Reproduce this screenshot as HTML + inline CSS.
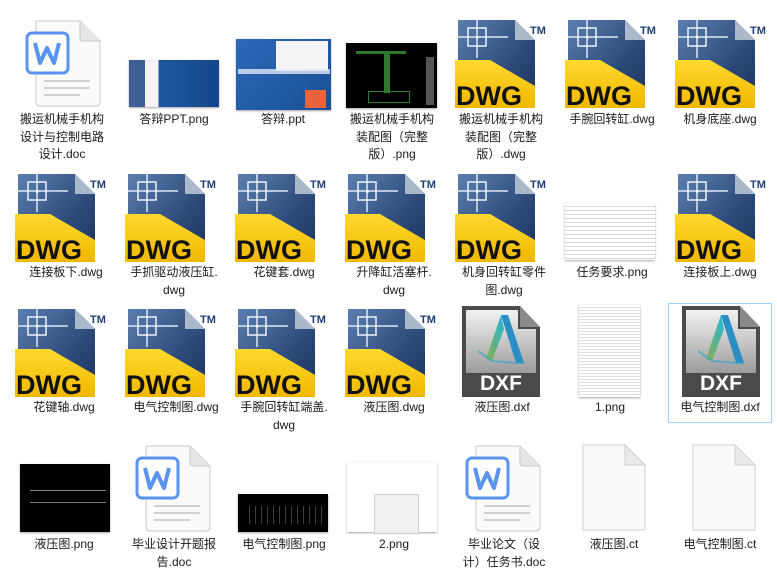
<!DOCTYPE html>
<html><head><meta charset="utf-8">
<style>
body{margin:0;width:777px;height:580px;background:#fff;position:relative;overflow:hidden;font-family:"Liberation Sans","Noto Sans CJK SC",sans-serif;}
.l{position:absolute;width:104px;text-align:center;font-size:12px;line-height:17.5px;color:#1a1a1a;white-space:nowrap;}
svg.ic{position:absolute;left:0;top:0;}
.t{position:absolute;box-shadow:0 1px 2px rgba(0,0,0,.35);}
.sel{position:absolute;left:668px;top:303px;width:102px;height:118px;border:1px solid #99d1ff;}
</style></head><body>
<div class="sel"></div>
<svg class="ic" width="777" height="580">
<defs>
<linearGradient id="bl" x1="0" y1="0" x2="1" y2="1"><stop offset="0" stop-color="#5b7fb0"/><stop offset="0.6" stop-color="#2d4a7a"/><stop offset="1" stop-color="#1c335e"/></linearGradient>
<linearGradient id="yl" x1="0" y1="0" x2="0" y2="1"><stop offset="0" stop-color="#ffd92e"/><stop offset="1" stop-color="#f0b800"/></linearGradient>
<linearGradient id="gy" x1="0" y1="0" x2="0" y2="1"><stop offset="0" stop-color="#f2f2f2"/><stop offset="1" stop-color="#9c9c9c"/></linearGradient>
<linearGradient id="ag" x1="0" y1="1" x2="1" y2="0"><stop offset="0" stop-color="#8bb04a"/><stop offset="1" stop-color="#22b6d8"/></linearGradient>
<symbol id="dwg" viewBox="0 0 104 100">
<path d="M10 6H67L87 26V92H10Z" fill="url(#bl)"/>
<path d="M67 6V26H87Z" fill="#aab8cc"/>
<path d="M10 23H60M29 6V44" stroke="#dfe8f3" stroke-width="1.5" fill="none"/>
<rect x="20" y="14" width="18" height="18" fill="none" stroke="#eef3f9" stroke-width="1.5"/>
<rect x="28" y="22" width="2.5" height="2.5" fill="#fff"/>
<path d="M7 46H42L87 72V94H7Z" fill="url(#yl)"/>
<text x="8" y="91" font-family="Liberation Sans" font-weight="bold" font-size="27" fill="#111">DWG</text>
<text x="82" y="20" font-family="Liberation Sans" font-weight="bold" font-size="11" fill="#1f3f73">TM</text>
</symbol>
<symbol id="dxf" viewBox="0 0 104 100">
<path d="M14 3H72L92 24V94H14Z" fill="#4a4a4a"/>
<path d="M18 7H70V26H88V70H18Z" fill="url(#gy)"/>
<path d="M72 3V24H92Z" fill="#8a8a8a"/>
<path d="M53 12L38 56L44 58L56 26Z" fill="url(#ag)"/>
<path d="M53 12H60L76 60H68Z" fill="#2a8fc4"/>
<path d="M30 48L44 58L68 60L76 60" fill="none" stroke="#2aa8c8" stroke-width="2" opacity=".6"/>
<text x="53" y="87" text-anchor="middle" font-family="Liberation Sans" font-weight="bold" font-size="21" fill="#fff">DXF</text>
</symbol>
<symbol id="doc" viewBox="0 0 104 100">
<path d="M28 7H72L92 27V88Q92 92 88 92H32Q28 92 28 88Z" fill="#fafafa" stroke="#c8c8c8"/>
<path d="M72 7V24Q72 27 75 27H92" fill="#e6e6e6" stroke="#c8c8c8"/>
<rect x="19" y="19" width="41" height="40" rx="5" fill="#fff" stroke="#5b93f0" stroke-width="3"/>
<path d="M27 29L32 49L39 34L46 49L51 29" fill="none" stroke="#5b93f0" stroke-width="4" stroke-linejoin="round"/>
<path d="M36 67H82M36 74H82M36 81H72" stroke="#cfcfcf" stroke-width="2"/>
</symbol>
<symbol id="blank" viewBox="0 0 104 100">
<path d="M25 6H67L87 26V91H25Z" fill="#fafafa" stroke="#d0d0d0"/>
<path d="M67 6V26H87Z" fill="#e9e9e9" stroke="#d0d0d0"/>
</symbol>
</defs>
<use href="#doc" x="8" y="14" width="104" height="100"/>
<use href="#dwg" x="448" y="14" width="104" height="100"/>
<use href="#dwg" x="558" y="14" width="104" height="100"/>
<use href="#dwg" x="668" y="14" width="104" height="100"/>
<use href="#dwg" x="8" y="168" width="104" height="100"/>
<use href="#dwg" x="118" y="168" width="104" height="100"/>
<use href="#dwg" x="228" y="168" width="104" height="100"/>
<use href="#dwg" x="338" y="168" width="104" height="100"/>
<use href="#dwg" x="448" y="168" width="104" height="100"/>
<use href="#dwg" x="668" y="168" width="104" height="100"/>
<use href="#dwg" x="8" y="303" width="104" height="100"/>
<use href="#dwg" x="118" y="303" width="104" height="100"/>
<use href="#dwg" x="228" y="303" width="104" height="100"/>
<use href="#dwg" x="338" y="303" width="104" height="100"/>
<use href="#dxf" x="448" y="303" width="104" height="100"/>
<use href="#dxf" x="668" y="303" width="104" height="100"/>
<use href="#doc" x="118" y="439" width="104" height="100"/>
<use href="#doc" x="448" y="439" width="104" height="100"/>
<use href="#blank" x="558" y="439" width="104" height="100"/>
<use href="#blank" x="668" y="439" width="104" height="100"/>
</svg>

<div class="t" style="left:129px;top:60px;width:90px;height:47px;background:linear-gradient(90deg,#3d5f97 0 18%,#f3f3f3 18% 33%,#1e58a0 33%,#14478a 100%);"></div>
<div class="t" style="left:236px;top:39px;width:95px;height:71px;background:linear-gradient(135deg,#2a69b8,#1a4f96);">
 <div style="position:absolute;left:40px;top:2px;width:52px;height:30px;background:#f4f4f4"></div>
 <div style="position:absolute;left:2px;top:30px;width:92px;height:5px;background:#dde8f5;opacity:.8"></div>
 <div style="position:absolute;left:69px;top:51px;width:21px;height:18px;background:#e8643a"></div>
</div>
<div class="t" style="left:346px;top:43px;width:91px;height:65px;background:#000;">
 <div style="position:absolute;left:38px;top:8px;width:6px;height:42px;background:#2f7a2f"></div>
 <div style="position:absolute;left:10px;top:8px;width:50px;height:3px;background:#2f7a2f"></div>
 <div style="position:absolute;left:80px;top:14px;width:8px;height:48px;background:#555"></div>
 <div style="position:absolute;left:22px;top:48px;width:40px;height:10px;border:1px solid #2f7a2f"></div>
</div>
<div class="t" style="left:565px;top:203px;width:90px;height:57px;background:repeating-linear-gradient(#fff 0 3px,#d8d8d8 3px 4px);"></div>
<div class="t" style="left:579px;top:305px;width:61px;height:92px;background:repeating-linear-gradient(#fff 0 2px,#e0e0e0 2px 3px);"></div>
<div class="t" style="left:20px;top:464px;width:90px;height:68px;background:#000;">
 <div style="position:absolute;left:10px;top:26px;width:76px;height:1px;background:#888"></div>
 <div style="position:absolute;left:10px;top:38px;width:76px;height:1px;background:#777"></div>
</div>
<div class="t" style="left:238px;top:494px;width:90px;height:38px;background:#000;">
 <div style="position:absolute;left:6px;top:12px;width:80px;height:18px;background:repeating-linear-gradient(90deg,#000 0 5px,#666 5px 6px);opacity:.6"></div>
</div>
<div class="t" style="left:347px;top:462px;width:90px;height:70px;background:#fff;">
 <div style="position:absolute;left:27px;top:32px;width:43px;height:38px;background:#f0f0f0;border:1px solid #ccc"></div>
</div>

<div class="l" style="left:10px;top:111px">搬运机械手机构<br>设计与控制电路<br>设计.doc</div>
<div class="l" style="left:122px;top:111px">答辩PPT.png</div>
<div class="l" style="left:231px;top:111px">答辩.ppt</div>
<div class="l" style="left:340px;top:111px">搬运机械手机构<br>装配图（完整<br>版）.png</div>
<div class="l" style="left:449px;top:111px">搬运机械手机构<br>装配图（完整<br>版）.dwg</div>
<div class="l" style="left:560px;top:111px">手腕回转缸.dwg</div>
<div class="l" style="left:668px;top:111px">机身底座.dwg</div>
<div class="l" style="left:14px;top:264px">连接板下.dwg</div>
<div class="l" style="left:122px;top:264px">手抓驱动液压缸.<br>dwg</div>
<div class="l" style="left:232px;top:264px">花键套.dwg</div>
<div class="l" style="left:342px;top:264px">升降缸活塞杆.<br>dwg</div>
<div class="l" style="left:452px;top:264px">机身回转缸零件<br>图.dwg</div>
<div class="l" style="left:560px;top:264px">任务要求.png</div>
<div class="l" style="left:668px;top:264px">连接板上.dwg</div>
<div class="l" style="left:12px;top:399px">花键轴.dwg</div>
<div class="l" style="left:124px;top:399px">电气控制图.dwg</div>
<div class="l" style="left:232px;top:399px">手腕回转缸端盖.<br>dwg</div>
<div class="l" style="left:342px;top:399px">液压图.dwg</div>
<div class="l" style="left:450px;top:399px">液压图.dxf</div>
<div class="l" style="left:558px;top:399px">1.png</div>
<div class="l" style="left:668px;top:399px">电气控制图.dxf</div>
<div class="l" style="left:12px;top:536px">液压图.png</div>
<div class="l" style="left:122px;top:536px">毕业设计开题报<br>告.doc</div>
<div class="l" style="left:232px;top:536px">电气控制图.png</div>
<div class="l" style="left:342px;top:536px">2.png</div>
<div class="l" style="left:452px;top:536px">毕业论文（设<br>计）任务书.doc</div>
<div class="l" style="left:562px;top:536px">液压图.ct</div>
<div class="l" style="left:668px;top:536px">电气控制图.ct</div>
</body></html>
